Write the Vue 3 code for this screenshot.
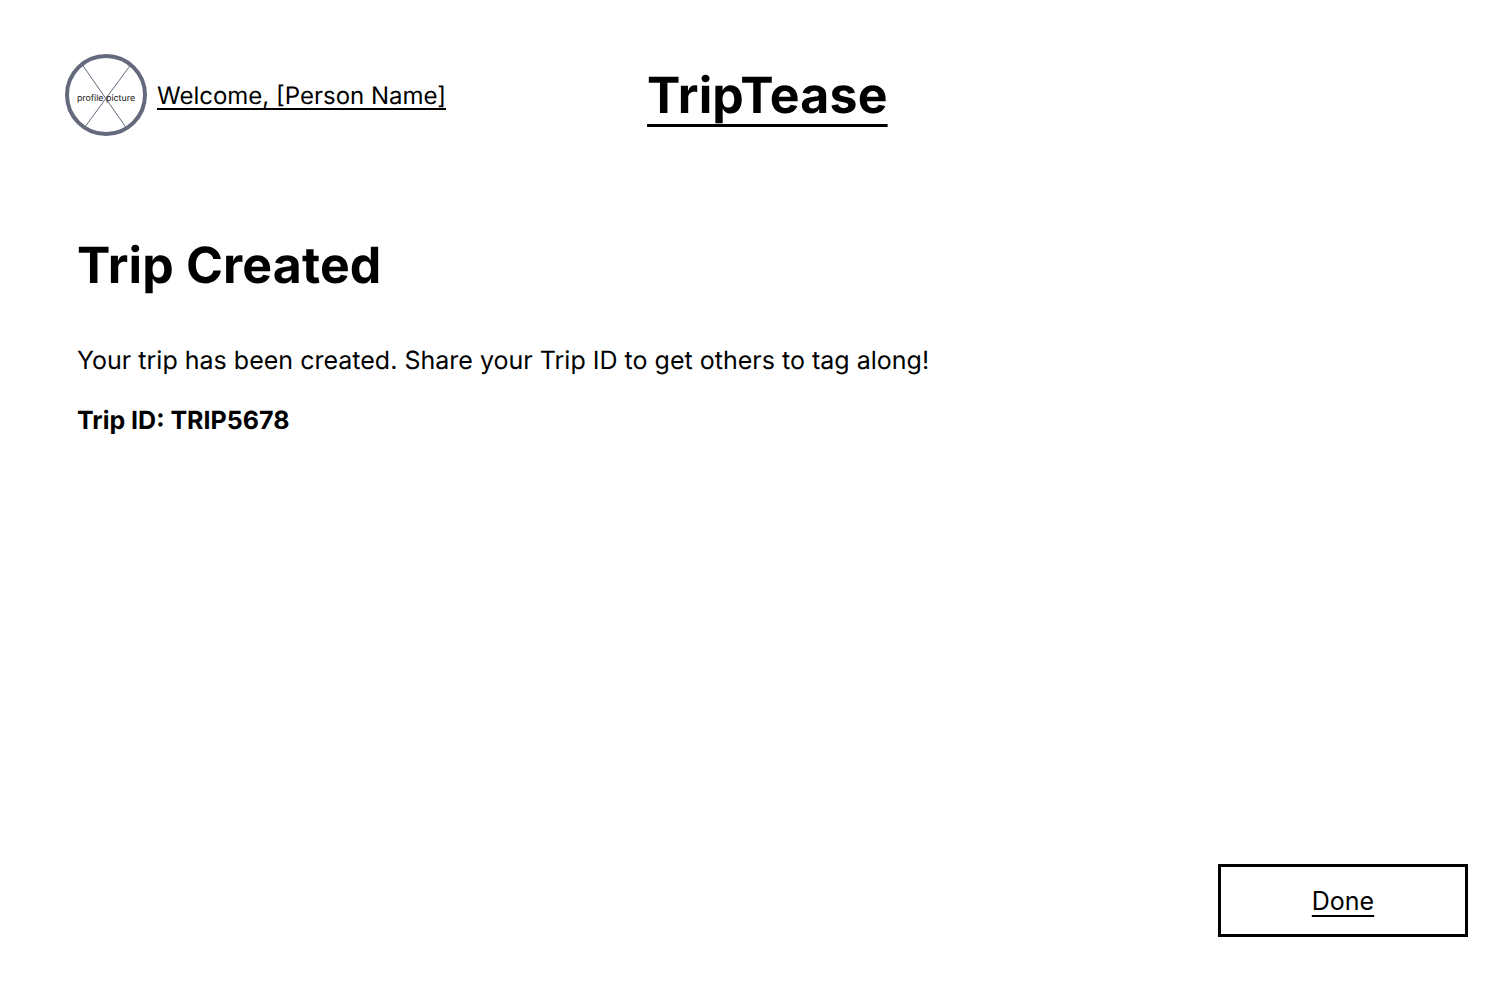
<script setup>
const tripId = 'TRIP5678'
</script>

<template>
  <div class="page">
    <header class="header">
      <a class="profile">
        <svg class="avatar" width="82" height="82" viewBox="0 0 82 82">
          <circle cx="41" cy="41" r="39" fill="#fff" stroke="#646a7c" stroke-width="4" />
          <path d="M17.5 11 L61 73.5 M65.5 11 L19.5 73.5" stroke="#646a7c" stroke-width="1" fill="none" />
          <text class="avatar-label" x="41" y="47" text-anchor="middle">profile picture</text>
        </svg>
        <span class="welcome">Welcome, [Person Name]</span>
      </a>
      <a class="brand">TripTease</a>
    </header>
    <main class="content">
      <h1 class="title">Trip Created</h1>
      <p class="text">Your trip has been created. Share your Trip ID to get others to tag along!</p>
      <p class="text strong">Trip ID: {{ tripId }}</p>
    </main>
    <footer class="footer">
      <button class="done">Done</button>
    </footer>
  </div>
</template>

<style>
body { background: #fff; }
</style>
<style scoped>
.page { box-sizing: border-box; width: 1512px; height: 982px; padding: 54px 44px 45px 65px; display: flex; flex-direction: column; color: #000; font-family: Inter, sans-serif; text-rendering: geometricPrecision; }
.header { display: grid; grid-template-columns: 582px auto; height: 82px; align-items: center; justify-content: start; }
.profile { display: flex; align-items: center; gap: 10px; }
.avatar { display: block; flex: none; }
.avatar-label { font-size: 8.85px; fill: #111; }
.welcome, .brand, .done { text-decoration: underline; text-decoration-skip-ink: none; }
.welcome { padding-top: 2px; font-size: 24px; line-height: 30px; white-space: nowrap; text-decoration-thickness: 2px; text-underline-offset: 4px; }
.brand { padding-top: 2px; font-size: 50px; line-height: 60px; font-weight: 700; letter-spacing: 0.18px; text-decoration-thickness: 3px; text-underline-offset: 11px; }
.content { padding: 100px 0 0 12px; flex: 1; }
.title { margin: 0 0 50px; font-size: 50px; line-height: 60px; font-weight: 700; letter-spacing: 0.15px; }
.text { margin: 0 0 30px; font-size: 25px; line-height: 30px; letter-spacing: 0.01px; }
.text.strong { font-weight: 700; letter-spacing: 0; }
.footer { display: flex; justify-content: flex-end; }
.done { width: 250px; height: 73px; padding: 0; border: 3px solid #000; background: #fff; color: #000; font: 400 25px/30px Inter, sans-serif; text-decoration-thickness: 2px; text-underline-offset: 5px; }
</style>
